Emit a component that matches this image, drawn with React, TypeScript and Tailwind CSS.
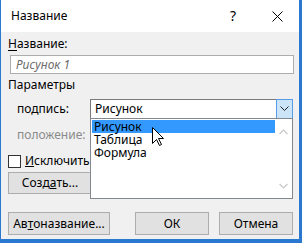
import React from "react";

const Btn = ({ children, w }: { children: React.ReactNode; w: string }) => (
  <div className={`${w} h-[23px] bg-[#e1e1e1] border border-[#adadad] flex items-center justify-center`}>{children}</div>
);

export default function App() {
  return (
    <div
      className="w-[302px] h-[243px] bg-[#2b78d0] flex pl-px pr-[3px] pb-[4px] text-[12px] leading-[16px] text-black"
      style={{ fontFamily: '"Noto Sans", "Segoe UI", sans-serif' }}
    >
      <div className="flex-1 flex flex-col bg-[#f0f0f0] relative">
        {/* title bar */}
        <div className="h-[32px] bg-white flex items-center shrink-0">
          <span className="ml-[10px] text-[12px]">Название</span>
          <span className="ml-auto w-[46px] text-center text-[14px]">?</span>
          <span className="w-[43px] flex justify-center">
            <svg width="11" height="11" viewBox="0 0 11 11">
              <path d="M0.5 0.5 L10.5 10.5 M10.5 0.5 L0.5 10.5" stroke="#000" strokeWidth="1" />
            </svg>
          </span>
        </div>

        <div className="flex flex-col">
          <div className="mt-[4px] ml-[7px]"><u className="no-underline border-b border-black leading-[13px] inline-block">Н</u>азвание:</div>
          <div className="mt-[3px] ml-[9px] w-[284px] h-[19px] bg-white border border-[#adadad] flex items-center pl-[5px] italic text-[#6d6d6d]">
            Рисунок 1
          </div>
          <div className="mt-[3px] ml-[7px]">Параметры</div>

          <div className="mt-[6px] flex items-center h-[20px]">
            <span className="ml-[16px] w-[73px]">по<u className="underline">д</u>пись:</span>
            <div className="w-[203px] h-[20px] bg-white border border-[#7a7a7a] flex items-center">
              <span className="flex-1 pl-[4px]">Рисунок</span>
              <div className="w-[17px] h-[20px] -mr-px -my-px bg-[#cce4f7] border border-[#569de5] flex items-center justify-center">
                <svg width="9" height="6" viewBox="0 0 9 6">
                  <path d="M0.5 0.5 L4.5 4.5 L8.5 0.5" stroke="#222" strokeWidth="1" fill="none" />
                </svg>
              </div>
            </div>
          </div>

          <div className="mt-[6px] flex items-center h-[20px]">
            <span className="ml-[16px] w-[73px] text-[#8a8a8a]">положение:</span>
          </div>

          <div className="mt-[8px] ml-[7px] flex items-center h-[16px]">
            <div className="w-[13px] h-[13px] bg-white border border-[#333] shrink-0" />
            <span className="ml-[4px] w-[65px] overflow-hidden whitespace-nowrap"><u>И</u>сключить подпись из названия</span>
          </div>

          <div className="mt-[3px] ml-[7px] w-[84px] h-[22px] bg-[#e1e1e1] border border-[#adadad] flex items-center justify-center">
            Созд<u>а</u>ть...
          </div>

          <div className="mt-[18px] ml-[7px] flex">
            <Btn w="w-[102px]">Ав<u>т</u>оназвание...</Btn>
            <div className="ml-[25px]"><Btn w="w-[74px]">ОК</Btn></div>
            <div className="ml-[10px]"><Btn w="w-[74px]">Отмена</Btn></div>
          </div>
        </div>

        {/* dropdown list */}
        <div className="absolute left-[89px] top-[118px] w-[203px] h-[81px] bg-white border border-[#828790] flex">
          <div className="flex-1 flex flex-col pt-[1px] pl-[1px]">
            <div className="h-[13px] bg-[#3399ff] text-black flex items-center pl-[2px] leading-[13px]">Рисунок</div>
            <div className="h-[13px] flex items-center pl-[2px] leading-[13px]">Таблица</div>
            <div className="h-[13px] flex items-center pl-[2px] leading-[13px]">Формула</div>
          </div>
          <div className="w-[17px] flex flex-col items-center justify-between pt-[10px] pb-[9px]">
            <svg width="9" height="6" viewBox="0 0 9 6">
              <path d="M0.5 5 L4.5 1 L8.5 5" stroke="#c8c8c8" strokeWidth="1.2" fill="none" />
            </svg>
            <svg width="9" height="6" viewBox="0 0 9 6">
              <path d="M0.5 1 L4.5 5 L8.5 1" stroke="#c8c8c8" strokeWidth="1.2" fill="none" />
            </svg>
          </div>
        </div>

        {/* mouse cursor */}
        <svg className="absolute left-[151px] top-[127px]" width="13" height="20" viewBox="0 0 13 20">
          <path d="M0.5 0.5 L0.5 16.5 L4.5 12.5 L7.5 18.5 L9.5 17.5 L6.5 11.5 L11.5 11.5 Z" fill="#fff" stroke="#000" strokeWidth="1" />
        </svg>
      </div>
    </div>
  );
}
